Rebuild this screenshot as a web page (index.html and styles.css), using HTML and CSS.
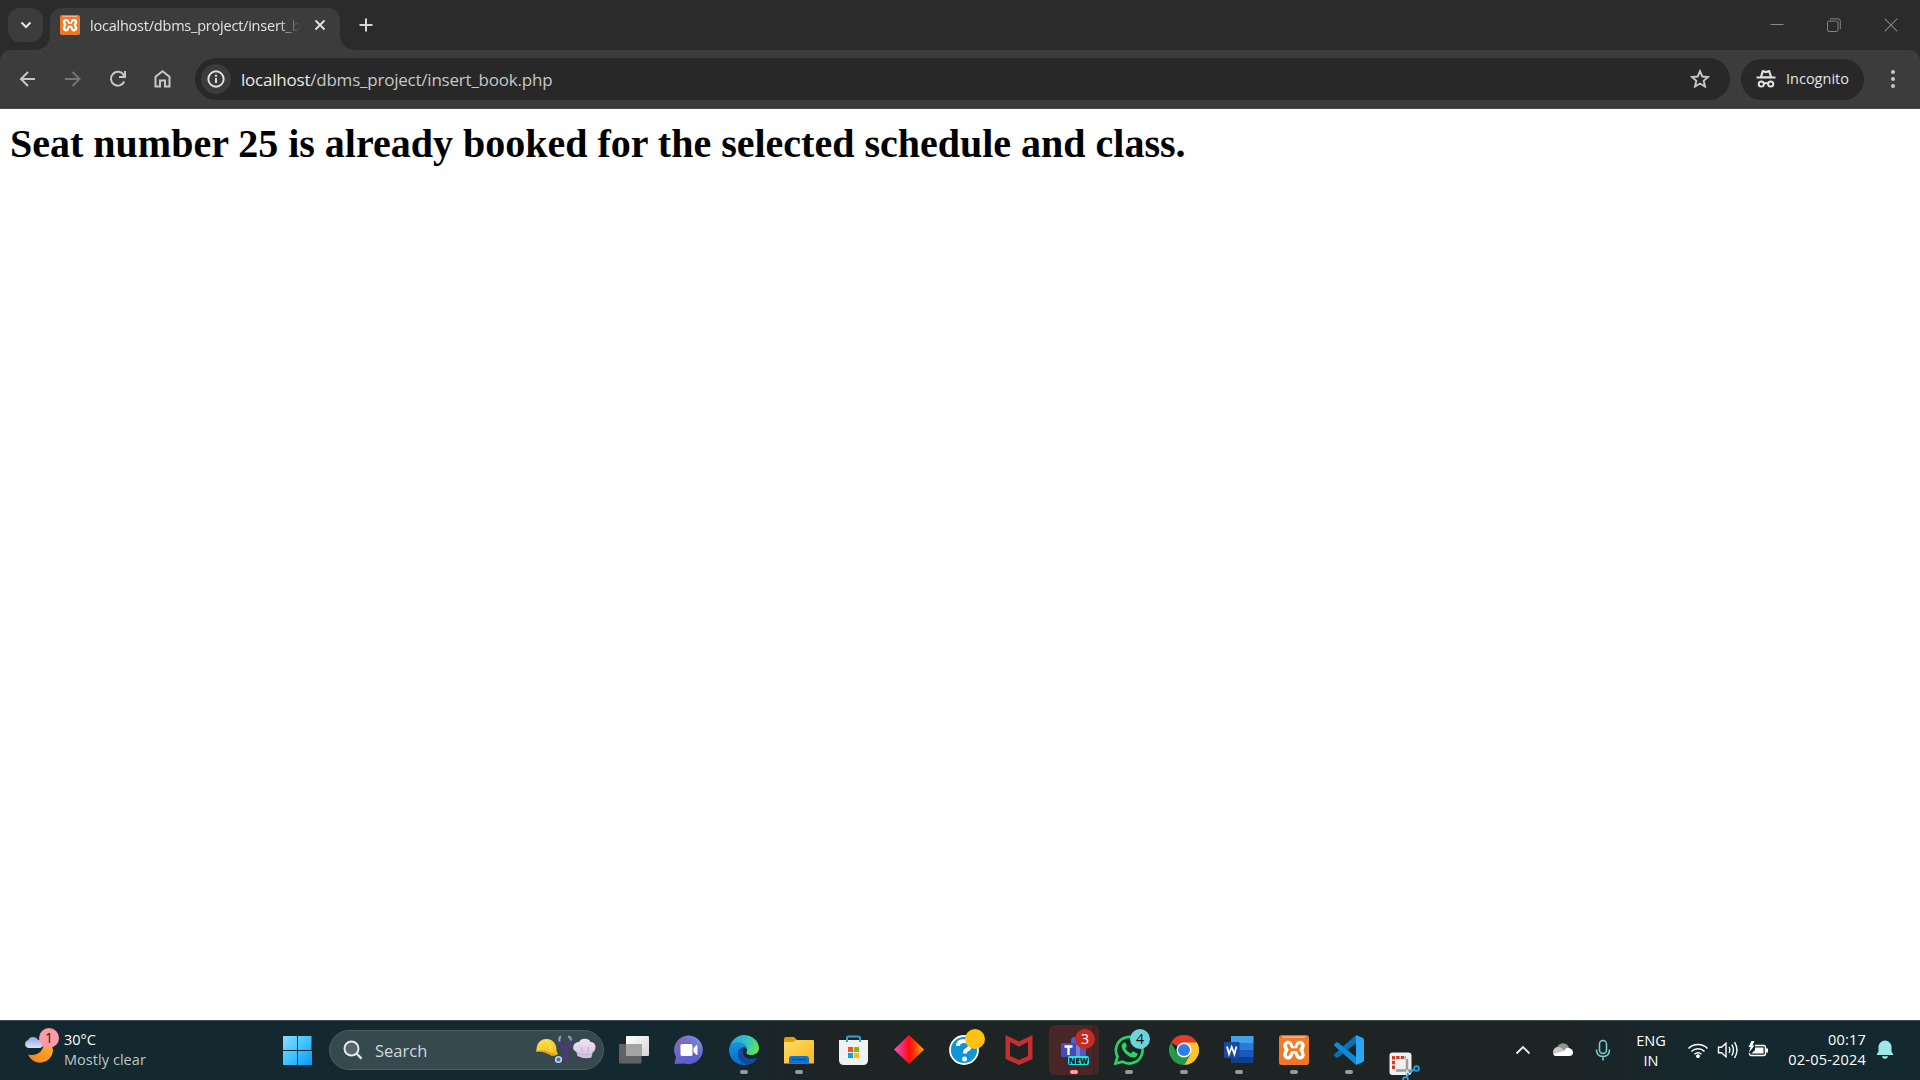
FILE: index.html
```html
<!DOCTYPE html>
<html lang="en">
<head>
<meta charset="utf-8">
<title>localhost/dbms_project/insert_book.php</title>
<link rel="stylesheet" href="styles.css">
</head>
<body>
<svg class="defs" width="0" height="0" aria-hidden="true">
  <defs>
    <linearGradient id="gOrange" x1="0" y1="0" x2="0" y2="1"><stop offset="0" stop-color="#d9611d"/><stop offset=".15" stop-color="#f57c26"/><stop offset="1" stop-color="#ef7522"/></linearGradient>
    <symbol id="xampp" viewBox="0 0 30 30">
      <rect width="30" height="30" rx="2.5" fill="url(#gOrange)"/>
      <path d="M2 1.200h26l-2.500 1.800h-21z" fill="#f9b384"/>
      <g fill="none" stroke-linecap="round" stroke-linejoin="round">
        <path d="M9 10.500 10.500 15 9 19.800M21 10.500 19.500 15l1.500 4.800" stroke="#fff" stroke-width="9.500"/>
        <path d="M10 15h10" stroke="#fff" stroke-width="7.500"/>
        <path d="M9.300 10.500 11.300 14.700 9 19.500M20.700 10.500l-2 4.200 2.300 4.800M11.300 14.700h7.400" stroke="#f27824" stroke-width="2.800"/>
      </g>
    </symbol>
  </defs>
</svg>

<div class="screen">
  <header class="browser">
    <div class="tabstrip">
      <button class="tab-search"><svg width="12" height="12" viewBox="0 0 12 12"><path d="M1.500 3.500 6 8l4.500-4.500" fill="none" stroke="#e3e3e3" stroke-width="2"/></svg></button>
      <div class="tab">
        <svg class="favicon" width="20" height="20"><use href="#xampp"/></svg>
        <span class="tab-title">localhost/dbms_project/insert_b</span>
        <svg width="12" height="12" viewBox="0 0 12 12"><path d="m1.500 1.500 9 9m0-9-9 9" stroke="#e3e3e3" stroke-width="1.800"/></svg>
      </div>
      <svg class="new-tab" width="14" height="14" viewBox="0 0 14 14"><path d="M7 .5v13M.5 7h13" stroke="#d5d5d5" stroke-width="2"/></svg>
      <div class="window-controls">
        <svg width="14" height="14" viewBox="0 0 14 14"><path d="M.5 6.500h13" stroke="#8a8a8a"/></svg>
        <svg width="14" height="14" viewBox="0 0 14 14" fill="none" stroke="#858585"><rect x=".5" y="3" width="10.500" height="10.500" rx="1.500"/><path d="M3 .8h8a2.300 2.300 0 0 1 2.300 2.300v8"/></svg>
        <svg width="14" height="14" viewBox="0 0 14 14"><path d="m.7.7 12.600 12.600m0-12.600L.7 13.300" stroke="#858585" stroke-width="1.100"/></svg>
      </div>
    </div>
    <div class="toolbar">
      <nav class="nav">
        <svg width="20" height="20" viewBox="0 0 20 20"><path d="M17 10H3.500M10 3 3 10l7 7" fill="none" stroke="#c7c7c7" stroke-width="2"/></svg>
        <svg width="20" height="20" viewBox="0 0 20 20"><path d="M2 10h14M9.500 3l7 7-7 7" fill="none" stroke="#757575" stroke-width="2"/></svg>
        <svg width="20" height="20" viewBox="0 0 20 20"><path d="M16.200 12.500A6.900 6.900 0 1 1 15.700 6L17 8M17 2v6h-6" fill="none" stroke="#c7c7c7" stroke-width="2"/></svg>
        <svg width="20" height="20" viewBox="0 0 20 20"><path d="M2.500 17.500V7.800L9.500 2.300l7 5.500v9.700H12v-6H7v6z" fill="none" stroke="#c7c7c7" stroke-width="2"/></svg>
      </nav>
      <div class="omnibox">
        <span class="site-info"><svg width="18" height="18" viewBox="0 0 18 18"><circle cx="9" cy="9" r="7.700" fill="none" stroke="#e3e3e3" stroke-width="1.900"/><path d="M9 8v5M9 4.700v2" stroke="#e3e3e3" stroke-width="1.900"/></svg></span>
        <span class="url"><b>localhost</b>/dbms_project/insert_book.php</span>
        <svg class="star" width="20" height="20" viewBox="0 0 20 20"><path d="m10 2.200 2.300 5.300 5.700.5-4.300 3.800 1.300 5.700-5-3-5 3 1.300-5.700L2 8l5.700-.5z" fill="none" stroke="#c7c7c7" stroke-width="1.900"/></svg>
      </div>
      <div class="incognito">
        <svg width="20" height="20" viewBox="0 0 20 20"><path d="M4 7.500 5.800 1.800Q6.200.7 7.200 1L10 1.900 12.800 1q1-.3 1.400.8l1.800 5.700H19.500v2H.5v-2z" fill="#e3e3e3"/><path d="m6.300 7.300 1.200-3.800L10 4.300l2.500-.8 1.200 3.800z" fill="#282828"/><g fill="none" stroke="#e3e3e3" stroke-width="2"><circle cx="5.300" cy="15" r="2.600"/><circle cx="14.700" cy="15" r="2.600"/><path d="M8 14.700q2-1.400 4 0"/></g></svg>
        <span>Incognito</span>
      </div>
      <svg class="kebab" width="6" height="20" viewBox="0 0 6 20" fill="#c7c7c7"><circle cx="3" cy="3" r="2"/><circle cx="3" cy="10" r="2"/><circle cx="3" cy="17" r="2"/></svg>
    </div>
  </header>

  <main class="page"><h1>Seat number 25 is already booked for the selected schedule and class.</h1></main>

  <footer class="taskbar">
    <div class="weather">
      <div class="weather-icon">
        <svg width="30" height="30" viewBox="0 0 30 30"><defs><linearGradient id="gMoon" x1="1" y1="0" x2="0" y2="1"><stop offset="0" stop-color="#ffb52e"/><stop offset="1" stop-color="#f47c20"/></linearGradient><linearGradient id="gCloud" x1="0" y1="0" x2="0" y2="1"><stop offset="0" stop-color="#8fa9e6"/><stop offset="1" stop-color="#d8e3fa"/></linearGradient></defs>
        <path d="M4 18.500C13 21 20 15 20 6c7 0 9 5 9 9a13 13 0 0 1-25 3.500z" fill="url(#gMoon)"/><path d="M4.500 12a4 4 0 0 1-.5-7.800A5.500 5.500 0 0 1 14 4a4 4 0 0 1 2 8z" fill="url(#gCloud)"/></svg>
        <span class="badge weather-badge">1</span>
      </div>
      <div class="weather-text"><span>30°C</span><span class="muted">Mostly clear</span></div>
    </div>

    <svg class="start" width="30" height="30" viewBox="0 0 30 30"><defs><linearGradient id="gWin" gradientUnits="userSpaceOnUse" x1="0" y1="0" x2="30" y2="30"><stop offset="0" stop-color="#8be0ff"/><stop offset=".5" stop-color="#42c5fb"/><stop offset="1" stop-color="#0796fb"/></linearGradient></defs><path d="M1.500 1H15v14H1V1.500zM16 1h13.500v14H16zM1 16h14v14H1zM16 16h14v14H16z" fill="url(#gWin)"/></svg>

    <div class="search">
      <svg width="20" height="20" viewBox="0 0 20 20" fill="none" stroke="#e4e9ea" stroke-width="2"><circle cx="8.500" cy="8.500" r="7" fill="#55656a"/><path d="m13.500 13.500 5 5.200" stroke-width="2.400"/></svg>
      <span>Search</span>
      <svg class="highlight" width="62" height="30" viewBox="0 0 62 30">
        <defs><linearGradient id="gHat" x1="0" y1="0" x2=".6" y2="1"><stop offset="0" stop-color="#ffe04a"/><stop offset="1" stop-color="#f3bf22"/></linearGradient><linearGradient id="gChef" x1="0" y1="0" x2="0" y2="1"><stop offset="0" stop-color="#f0e4f3"/><stop offset="1" stop-color="#d3bfde"/></linearGradient></defs>
        <path d="M1.500 15C1.500 8 6 3.500 12 4c6 .5 10 5 9.500 12l1.500 3q-2 1.500-6 1.500-4-3.500-9.500-4.500L.8 16.500z" fill="url(#gHat)"/><path d="M.8 16.500Q8 13.500 15 17.500l8 1.500q-2 2-6.500 1.700Q9 16 .8 16.500z" fill="#e3a916"/><path d="M10 4.500q5 3 6 11" stroke="#fff07a" fill="none"/>
        <path d="M24.500 5q0 6.500 5 7.500 6-.5 6.500-8M30 12.500q2.500 3 2.500 6 0 5-7 5.500" fill="none" stroke="#5b2f96" stroke-width="2.500"/><path d="M26 1.500q-2.500 1-1.500 5M33 1.500q3 .5 3 4" fill="none" stroke="#9a9eb2" stroke-width="2"/><circle cx="23.500" cy="24.500" r="2.800" fill="#4f6f99" stroke="#bcd8f2" stroke-width="1.600"/>
        <path d="M41.500 17Q37 15 38.500 10.500 40 7 44 7q2-3.500 6-3.300 4 0 5.500 3.300 4.500.2 5 4.500.2 4-3 6L56.500 22.500q-7 2-14 -1.500z" fill="url(#gChef)"/><path d="M42 18q7 3.500 15.500.5M46.500 12l1 6m6-6-.8 6" stroke="#bda8ce" stroke-width=".8" fill="none"/>
      </svg>
    </div>

    <div class="apps">
      <div class="app"><svg width="30" height="30" viewBox="0 0 30 30"><defs><linearGradient id="gTv" x1="0" y1="0" x2="1" y2="1"><stop offset="0" stop-color="#fff"/><stop offset="1" stop-color="#d5d5d5"/></linearGradient></defs><rect x="7" y="1" width="23" height="20" rx="1" fill="url(#gTv)"/><rect y="9" width="22.500" height="19.500" rx="1" fill="#606263"/><path d="M7 9h15.500v12H8q-1 0-1-1z" fill="#a4a4a4"/></svg></div>
      <div class="app"><svg width="30" height="30" viewBox="0 0 30 30"><defs><linearGradient id="gMeet" x1="0" y1="0" x2=".7" y2="1"><stop offset="0" stop-color="#a46bab"/><stop offset=".45" stop-color="#6868c5"/><stop offset="1" stop-color="#5b5bd0"/></linearGradient><linearGradient id="gMeet2" x1="1" y1="0" x2="0" y2="1"><stop offset="0" stop-color="#8bb2ee"/><stop offset=".6" stop-color="#5b5bd0" stop-opacity="0"/></linearGradient></defs><path d="M.5 29 2 22A14.300 14.300 0 1 1 10 28.500z" fill="url(#gMeet)"/><path d="M.5 29 2 22A14.300 14.300 0 1 1 10 28.500z" fill="url(#gMeet2)"/><rect x="6.500" y="9" width="12" height="12" rx="1.500" fill="#fff"/><path d="m19.500 13 2.500-2.500q1.500-1 1.500 .5v8q0 1.500-1.500.5L19.500 17z" fill="#fff"/></svg></div>
      <div class="app"><svg width="30" height="30" viewBox="0 0 30 30"><defs><linearGradient id="gE1" x1="0" y1=".3" x2="1" y2=".6"><stop offset="0" stop-color="#299fe0"/><stop offset=".55" stop-color="#35c5c3"/><stop offset="1" stop-color="#66e14b"/></linearGradient><linearGradient id="gE2" x1="0" y1="0" x2="0" y2="1"><stop offset="0" stop-color="#1895dc"/><stop offset="1" stop-color="#0866c9"/></linearGradient></defs><path d="M1 11C3 4 9 0 15 0c8 0 15 6 15 13 0 5-4 7-8 7-3 0-5-1-4.500-3 1.500-2 .5-6-3-7C9 8 4 9 1 11z" fill="url(#gE1)"/><path d="M0 15C0 10 4 7 9 7c5 0 9 3 9 7-4-4-8 0-6 5 2 5 8 8 16 4-3 5-8 7-13 7C6 30 0 23 0 15z" fill="url(#gE2)"/><path d="M15 12c-5 1-7 4-6 9s6 8 10 8.500c4-1 7-4 9-7-7 3-13 1-14-4-.5-3 0-5 1-6.500z" fill="#104b9f"/></svg><i class="running"></i></div>
      <div class="app"><svg width="30" height="30" viewBox="0 0 30 30"><defs><linearGradient id="gFold" x1="0" y1="0" x2="1" y2="1"><stop offset="0" stop-color="#ffdc69"/><stop offset="1" stop-color="#f8b719"/></linearGradient></defs><path d="M0 4q0-2 2-2h8l3 3h15v5H0z" fill="#dfa00b"/><path d="M0 7h9l3-2h17q1 0 1 1v22.500H0z" fill="url(#gFold)"/><path d="M5 28.500v-5q0-2.500 2.500-2.500h15q2.500 0 2.500 2.500v5z" fill="#1074ce"/><path d="M8 24.500h14" stroke="#0a4790" stroke-width="1.200"/></svg><i class="running"></i></div>
      <div class="app"><svg width="30" height="30" viewBox="0 0 30 30"><path d="M0 5h29v20q0 5-5 5H5q-5 0-5-5z" fill="#f1f1f1"/><path d="M8 7V3q0-1.500 1.500-1.500h10Q21 1.500 21 3v4" fill="none" stroke="#25a6dd" stroke-width="2"/><path d="M9 12h5v5H9z" fill="#f25022"/><path d="M15 12h5v5h-5z" fill="#7fba00"/><path d="M9 18h5v5H9z" fill="#00a4ef"/><path d="M15 18h5v5h-5z" fill="#ffb900"/></svg></div>
      <div class="app"><svg width="30" height="30" viewBox="0 0 30 30"><defs><linearGradient id="gDia"><stop offset="0" stop-color="#ed52d0"/><stop offset=".5" stop-color="#ff0b12"/><stop offset=".68" stop-color="#ff3807"/><stop offset="1" stop-color="#ffac0b"/></linearGradient></defs><path d="m15 0 15 14.500L15 29 0 14.500z" fill="url(#gDia)"/></svg></div>
      <div class="app"><svg width="30" height="30" viewBox="0 0 30 30"><circle cx="15" cy="15" r="14" fill="#0d95d8" stroke="#fff" stroke-width="1.800"/><path d="M9 11q0-5 6-5t6 4.500q0 3-3.500 4.500-1.500.8-1.500 3.500" fill="none" stroke="#fff" stroke-width="4"/><circle cx="15.500" cy="24" r="2.500" fill="#fff"/></svg><span class="badge dot-badge"></span></div>
      <div class="app"><svg width="30" height="30" viewBox="0 0 30 30"><path d="m1.500 0 13.500 6.500L28.500 0v24L15 30 1.500 24zM6 7v14l9 4 9-4V7l-9 4.500z" fill="#c42f30" fill-rule="evenodd"/></svg></div>
      <div class="app attention"><svg width="30" height="30" viewBox="0 0 30 30"><circle cx="16" cy="6" r="4" fill="#5160c5"/><path d="M11 10h16v12q-5 5-12 2z" fill="#7580d9"/><path d="M21 10h6v12h-6z" fill="#505bc0"/><rect x="2" y="8" width="15" height="14" rx="1" fill="#424cba"/><path d="M5.500 11.500h8M9.500 11.500V20" stroke="#fff" stroke-width="2.300"/></svg><span class="badge teams-badge">3</span><span class="new-label">NEW</span><i class="running"></i></div>
      <div class="app"><svg width="30" height="30" viewBox="0 0 30 30"><path d="m1.500 28.500 2-7A13.300 13.300 0 1 1 8.500 26.700z" fill="none" stroke="#25d366" stroke-width="2.700"/><path d="M10 7.500q-4 2-1.500 7c2.500 4.500 7 8.500 12 8 2-.5 3-2 3-4l-4.500-2.200-2.300 2.300q-4-1.800-5.500-5.300l1.800-2L11.500 7.500z" fill="#25d366"/></svg><span class="badge whats-badge">4</span><i class="running"></i></div>
      <div class="app"><svg width="30" height="30" viewBox="0 0 30 30"><path d="M15 15 2 7.500A15 15 0 0 1 28 7.500z" fill="#e33b2e"/><path d="M15 7.500h13A15 15 0 0 1 15 30l6.500-11.300z" fill="#fdc32d"/><path d="M2 7.500A15 15 0 0 0 15 30l6.500-11.300L15 22.500 8.500 18.700z" fill="#249b48"/><circle cx="15" cy="15" r="7.500" fill="#fff"/><circle cx="15" cy="15" r="6" fill="#327ce8"/></svg><i class="running"></i></div>
      <div class="app"><svg width="30" height="30" viewBox="0 0 30 30"><path d="M7 1h22.500v7H7z" fill="#40a4ec"/><path d="M7 8h22.500v7H7z" fill="#2c7bd7"/><path d="M7 15h22.500v7H7z" fill="#195abd"/><path d="M7 22h22.500v6H7z" fill="#103d91"/><rect y="7" width="15.500" height="16" rx="1" fill="#17499f"/><path d="m3 11.500 2 7.500 2.700-7 2.700 7 2-7.500" fill="none" stroke="#fff" stroke-width="1.800"/></svg><i class="running"></i></div>
      <div class="app"><svg width="30" height="30"><use href="#xampp"/></svg><i class="running"></i></div>
      <div class="app"><svg width="30" height="30" viewBox="0 0 30 30"><path d="M22 0v8L4 22.500q-1 .7-2 0L.5 21q-.8-1 0-2z" fill="#0870b4"/><path d="M22 30v-8L4 7.500q-1-.7-2 0L.5 9q-.8 1 0 2z" fill="#0b8ad6"/><path d="m22 0 7 3q1 .5 1 1.500v21q0 1-1 1.500l-7 3z" fill="#27a8f0"/></svg><i class="running"></i></div>
      <div class="app snip"><svg width="32" height="32" viewBox="0 0 32 32"><rect x=".5" y=".5" width="22" height="22.500" rx="3" fill="#f0f0f2"/><path d="M4.500 17V5.500H17" fill="none" stroke="#d83b1b" stroke-width="3" stroke-dasharray="3.500 1.200"/><path d="M18 7v16M7 18.500h17" stroke="#9b9da3" stroke-width="2.500"/><path d="M18 18v6" stroke="#d8dadd" stroke-width="2"/><g fill="none" stroke="#24a0df" stroke-width="1.800"><circle cx="27.500" cy="16.500" r="2.400"/><circle cx="16.500" cy="27.500" r="2.400"/><path d="m20 20.500 5-2.500m-6 3-1 5"/></g></svg></div>
    </div>

    <div class="tray">
      <svg width="16" height="16" viewBox="0 0 16 16"><path d="m1.500 11.500 6.500-6.500 6.500 6.500" fill="none" stroke="#f0f0f0" stroke-width="1.800"/></svg>
      <svg width="22" height="16" viewBox="0 0 22 16"><path d="M5 9a6 6 0 0 1 12-3l-5 6z" fill="#929494"/><path d="M1 10.500Q1 5 6.500 5q3 0 6 4.500L5 14q-4 0-4-3.500z" fill="#c8c9c9"/><path d="M12 9q2-4 5-3 4 1 4 4.500 0 3.500-4 3.500H4Q2 14 1.500 12z" fill="#fff"/></svg>
      <svg width="16" height="22" viewBox="0 0 16 22" fill="none" stroke="#79cfd2" stroke-width="1.500"><rect x="4.500" y="1.500" width="7" height="13" rx="3.500"/><path d="M1.500 10.500q0 7 6.500 7t6.500-7M8 17.500v4"/></svg>
      <div class="lang"><span>ENG</span><span>IN</span></div>
      <svg class="status" width="22" height="18" viewBox="0 0 22 18" fill="none" stroke="#fff" stroke-width="1.500"><path d="M1.500 7.500a13.500 13.500 0 0 1 19 0M4.500 10.500a9.300 9.300 0 0 1 13 0M7.500 13.300a5 5 0 0 1 7 0"/><circle cx="11" cy="15.200" r="1.500" fill="#fff" stroke-width="1"/></svg>
      <svg class="status" width="22" height="18" viewBox="0 0 22 18" fill="none" stroke="#fff" stroke-width="1.400"><path d="M1.500 6.300h3l4.500-4v13.500l-4.500-4h-3zM12 6q1.800 3 0 6M14.700 3.500q3.500 5.500 0 11M17.500 1.200q5 7.800 0 15.600"/></svg>
      <svg class="status" width="22" height="18" viewBox="0 0 22 18"><path d="M8 4.500h8.500q2 0 2 2v6q0 2-2 2h-12q-2 0-2-2V12" fill="none" stroke="#fff" stroke-width="1.400"/><path d="M19 7.500h2v4h-2zM8 6.500h8.500v6h-12L8 9z" fill="#fff"/><path d="m4.500 0-3 6h2L2 11.500 7.500 4.500h-2L7.500 0z" fill="#fff"/></svg>
      <div class="clock"><span>00:17</span><span>02-05-2024</span></div>
      <svg class="bell" width="18" height="20" viewBox="0 0 18 20" fill="#9ee8ea"><path d="M9 .5a6.500 6.500 0 0 1 6.500 6.500v4.500L17.500 15H.5l2-3.500V7A6.500 6.500 0 0 1 9 .5zM5.800 16.300h6.400Q11.500 19 9 19t-3.200-2.700z"/></svg>
    </div>
  </footer>
</div>
</body>
</html>
```
FILE: styles.css
```css
* { box-sizing: border-box; }
body { margin: 0; background: #fff; font-family: "Open Sans", "Noto Sans", sans-serif; }
.defs { position: absolute; }
.screen { display: flex; flex-direction: column; width: 1920px; height: 1080px; overflow: hidden; }
svg { display: block; flex: none; }
button { border: 0; padding: 0; }

.browser { background: #2b2b2b; }
.tabstrip { display: flex; align-items: center; height: 50px; padding-left: 8px; }
.tab-search { display: flex; align-items: center; justify-content: center; width: 35px; height: 34px; border-radius: 12px; background: #3c3c3c; }
.tab { position: relative; display: flex; align-items: center; align-self: flex-end; width: 290px; height: 42px; margin-left: 7px; padding: 0 14px 8px 10px; border-radius: 12px 12px 0 0; background: #3c3c3c; }
.tab::before, .tab::after { content: ""; position: absolute; bottom: 0; width: 14px; height: 14px; }
.tab::before { left: -14px; background: radial-gradient(circle at 0 0, transparent 13.5px, #3c3c3c 14px); }
.tab::after { right: -14px; background: radial-gradient(circle at 100% 0, transparent 13.5px, #3c3c3c 14px); }
.tab-title { width: 214px; margin: 1px 10px 0 10px; white-space: nowrap; font-size: 14.5px; line-height: 22px; letter-spacing: -.22px; color: #e3e3e3; -webkit-mask-image: linear-gradient(90deg, #000 188px, transparent 210px); mask-image: linear-gradient(90deg, #000 188px, transparent 210px); }
.new-tab { margin-left: 18.5px; }
.window-controls { display: flex; gap: 43px; margin-left: auto; padding-right: 22px; }

.toolbar { display: flex; align-items: center; height: 59px; border-bottom: 1px solid #4a4848; border-radius: 10px 10px 0 0; background: #3c3c3c; }
.nav { display: flex; gap: 25px; padding-left: 18px; }
.omnibox { display: flex; align-items: center; width: 1535px; height: 42px; margin-left: 22px; padding: 0 20px 0 6px; border-radius: 21px; background: #282828; }
.site-info { display: flex; align-items: center; justify-content: center; width: 30px; height: 30px; border-radius: 50%; background: #3c3c3c; }
.url { margin: 1px 0 0 10px; font-size: 17px; line-height: 24px; letter-spacing: -.22px; color: #c7c7c7; }
.url b { font-weight: 400; color: #e8e8e8; }
.star { margin-left: auto; }
.incognito { display: flex; align-items: center; gap: 10px; width: 123px; height: 41px; margin-left: 11px; padding: 0 0 1px 15px; border-radius: 21px; background: #282828; color: #e3e3e3; font-size: 14.5px; }
.kebab { margin-left: 25.5px; }

.page { flex: 1; padding: 11px 10px; }
h1 { margin: 0; white-space: nowrap; font: bold 40px/47px "Liberation Serif", serif; color: #000; }

.taskbar { display: flex; align-items: center; height: 60px; box-shadow: inset 0 1px #3a4a4d; color: #fff; background: linear-gradient(90deg, #14292f 0, #14292f 680px, #1e2324 850px, #1e2324 1540px, #14292f 1740px, #14292f 100%); }
.weather { display: flex; width: 258px; padding-left: 24px; }
.weather-icon { position: relative; width: 30px; height: 38px; padding-top: 6px; }
.weather-text { display: flex; flex-direction: column; margin-left: 10px; font-size: 14.5px; line-height: 20px; white-space: nowrap; }
.muted { color: #bfc6c7; letter-spacing: .05px; }
.badge { position: absolute; width: 20px; height: 20px; border-radius: 50%; font-size: 14px; line-height: 20px; text-align: center; }
.weather-badge { left: 15px; top: -2px; background: #ff99a4; color: #1c1c1c; }
.start { margin-left: 24px; }
.search { display: flex; align-items: center; width: 275px; height: 40px; margin-left: 17px; padding: 0 6px 0 13px; border: 1px solid #4d5e61; border-radius: 20px; background: #36494e; color: #d3dadb; font-size: 16.5px; }
.search span { margin-left: 12px; }
.highlight { margin-left: auto; }

.apps { display: flex; margin-left: 2.5px; }
.app { position: relative; display: flex; align-items: center; justify-content: center; width: 55px; height: 60px; }
.running { position: absolute; left: 23.5px; bottom: 6px; width: 8px; height: 4px; border-radius: 2px; background: #979a9b; }
.dot-badge { left: 28.5px; top: 9px; background: #ffc20e; }
.attention::before { content: ""; position: absolute; z-index: -1; left: 2.5px; top: 5px; width: 50px; height: 50px; border-radius: 6px; background: linear-gradient(90deg, #492729 44px, #382224 44px, #382224 45px, #422729 45px); }
.attention { z-index: 0; }
.attention .running { background: #ff99a4; }
.teams-badge { left: 28.5px; top: 9px; background: #c52b20; }
.whats-badge { left: 28.5px; top: 9px; background: #6fd2da; color: #111; }
.new-label { position: absolute; left: 21.5px; top: 36px; width: 21px; height: 9px; border-radius: 2px; background: #20e5e5; color: #071b22; font-size: 8px; line-height: 9px; font-weight: 800; text-align: center; }
.snip { align-items: flex-start; padding: 32px 0 0 1px; overflow: hidden; }

.tray { display: grid; grid-template-columns: 40px 40px 40px 56px 4px 30px 30px 30px 93px 38px; align-items: center; justify-items: center; margin-left: auto; padding-right: 16px; font-size: 14.5px; line-height: 20px; }
.lang { display: flex; flex-direction: column; align-items: center; padding-top: 1px; }
.status:nth-of-type(4) { grid-column: 6; }
.clock { display: flex; flex-direction: column; align-items: flex-end; justify-self: end; white-space: nowrap; letter-spacing: .2px; }
```
